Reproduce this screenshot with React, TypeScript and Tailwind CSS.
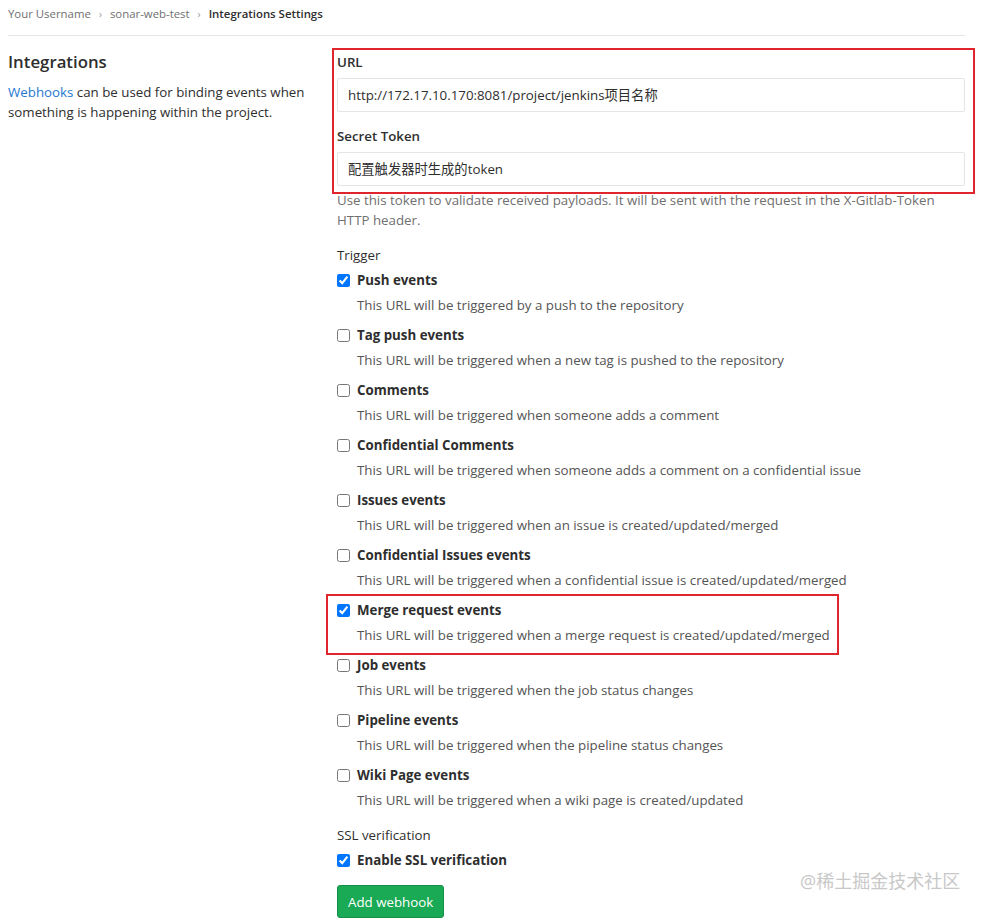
import React from "react";

const triggers = [
  { label: "Push events", desc: "This URL will be triggered by a push to the repository", checked: true },
  { label: "Tag push events", desc: "This URL will be triggered when a new tag is pushed to the repository", checked: false },
  { label: "Comments", desc: "This URL will be triggered when someone adds a comment", checked: false },
  { label: "Confidential Comments", desc: "This URL will be triggered when someone adds a comment on a confidential issue", checked: false },
  { label: "Issues events", desc: "This URL will be triggered when an issue is created/updated/merged", checked: false },
  { label: "Confidential Issues events", desc: "This URL will be triggered when a confidential issue is created/updated/merged", checked: false },
  { label: "Merge request events", desc: "This URL will be triggered when a merge request is created/updated/merged", checked: true, marked: true },
  { label: "Job events", desc: "This URL will be triggered when the job status changes", checked: false },
  { label: "Pipeline events", desc: "This URL will be triggered when the pipeline status changes", checked: false },
  { label: "Wiki Page events", desc: "This URL will be triggered when a wiki page is created/updated", checked: false },
];

function Check({ checked }: { checked: boolean }) {
  return (
    <input
      type="checkbox"
      defaultChecked={checked}
      className="m-0 h-[13px] w-[13px] shrink-0"
    />
  );
}

function TriggerItem({ t }: { t: (typeof triggers)[number] }) {
  return (
    <div className="relative mb-[10px]">
      {t.marked && (
        <div className="pointer-events-none absolute -left-[11px] -top-[6px] -bottom-[10px] w-[513px] border-2 border-[#e0262c]" />
      )}
      <label className="flex h-5 items-center gap-[7px]">
        <Check checked={t.checked} />
        <span className="font-bold text-[#2e2e2e]">{t.label}</span>
      </label>
      <p className="mt-[5px] pl-[20px] leading-5 text-[#555]">{t.desc}</p>
    </div>
  );
}

export default function App() {
  return (
    <div
      className="relative min-h-[919px] w-[985px] bg-white px-2 text-[13.3px] leading-5 text-[#2e2e2e]"
      style={{ fontFamily: '"Open Sans", "Noto Sans CJK SC", sans-serif' }}
    >
      {/* breadcrumb */}
      <nav className="flex h-[36px] w-[957px] items-center gap-[8px] border-b border-[#e5e5e5] pb-[8px] text-[11.4px] text-[#707070]">
        <span>Your Username</span>
        <span className="text-[10px] text-[#999]">›</span>
        <span>sonar-web-test</span>
        <span className="text-[10px] text-[#999]">›</span>
        <span className="font-semibold text-[#2e2e2e]">Integrations Settings</span>
      </nav>

      <div className="flex pt-[16px]">
        {/* left column */}
        <div className="w-[329px] shrink-0 pr-[20px]">
          <h4 className="text-[16.8px] font-semibold leading-5 text-[#2e2e2e]">Integrations</h4>
          <p className="mt-[10px] leading-5 text-[#2e2e2e]">
            <a className="text-[#1f78d1]">Webhooks</a> can be used for binding events when something is happening
            within the project.
          </p>
        </div>

        {/* right column */}
        <div className="w-[628px]">
          <div className="relative">
            <div className="pointer-events-none absolute -left-[5px] -right-[10px] -top-[4px] -bottom-[8px] border-2 border-[#e0262c]" />
            <label className="mb-[6px] block font-semibold">URL</label>
            <div className="flex h-[34px] items-center rounded-[2px] border border-[#e5e5e5] px-[10px] text-[#2e2e2e]">
              http://172.17.10.170:8081/project/jenkins项目名称
            </div>
            <label className="mb-[6px] mt-[14px] block font-semibold">Secret Token</label>
            <div className="flex h-[34px] items-center rounded-[2px] border border-[#e5e5e5] px-[10px] text-[#2e2e2e]">
              配置触发器时生成的token
            </div>
          </div>
          <p className="mt-[4px] leading-5 text-[#707070]">
            Use this token to validate received payloads. It will be sent with the request in the X-Gitlab-Token
            HTTP header.
          </p>

          <label className="mb-[5px] mt-[15px] block">Trigger</label>
          {triggers.map((t) => (
            <TriggerItem key={t.label} t={t} />
          ))}

          <label className="mt-[15px] block">SSL verification</label>
          <label className="mt-[5px] flex h-5 items-center gap-[7px]">
            <Check checked />
            <span className="font-bold">Enable SSL verification</span>
          </label>

          <button className="mt-[15px] h-[33px] rounded-[3px] border border-[#168f48] bg-[#1aaa55] px-[10px] text-white">
            Add webhook
          </button>
        </div>
      </div>

      <div className="pointer-events-none absolute left-[800px] top-[871px] text-[18px] text-[#c8c8c8]">
        @稀土掘金技术社区
      </div>
    </div>
  );
}
